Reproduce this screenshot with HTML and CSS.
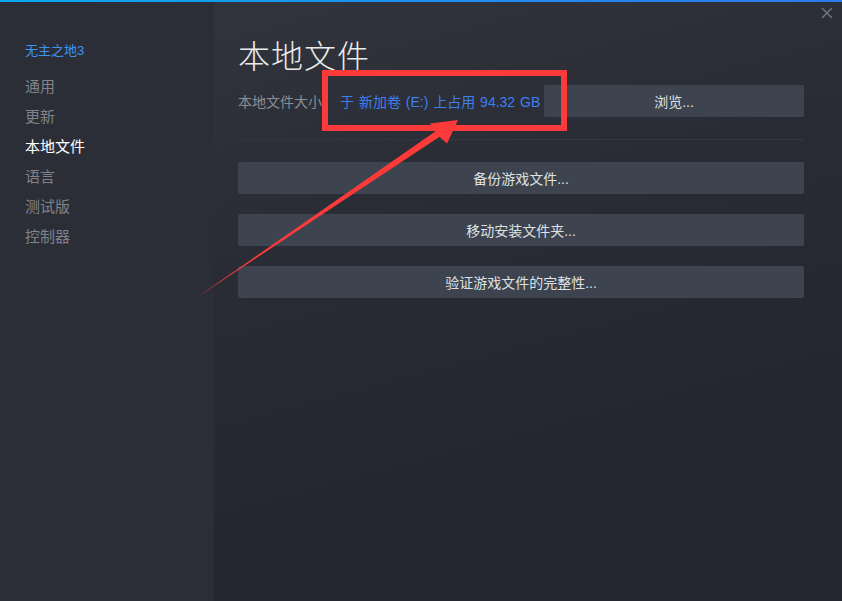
FILE: index.html
```html
<!DOCTYPE html>
<html lang="zh-CN">
<head>
<meta charset="utf-8">
<title>本地文件</title>
<link rel="stylesheet" href="styles.css">
</head>
<body>
<div class="app">
  <div class="topline"></div>
  <div class="window">
    <nav class="sidebar">
      <div class="game">无主之地3</div>
      <ul class="menu">
        <li>通用</li>
        <li>更新</li>
        <li class="active">本地文件</li>
        <li>语言</li>
        <li>测试版</li>
        <li>控制器</li>
      </ul>
    </nav>
    <main class="content">
      <h1 class="title">本地文件</h1>
      <div class="size-row">
        <div class="size-text"><span class="label">本地文件大小：</span><span class="value">于 新加卷 (E:) 上占用 94.32 GB</span></div>
        <button class="btn browse">浏览...</button>
      </div>
      <div class="sep"></div>
      <div class="actions">
        <button class="btn">备份游戏文件...</button>
        <button class="btn">移动安装文件夹...</button>
        <button class="btn">验证游戏文件的完整性...</button>
      </div>
    </main>
  </div>
  <div class="close">
    <svg width="12" height="12" viewBox="0 0 12 12"><path d="M1 1 L11 11 M11 1 L1 11" stroke="#68737d" stroke-width="1.6" fill="none"/></svg>
  </div>
  <svg class="annot" width="842" height="601" viewBox="0 0 842 601">
    <rect x="325" y="73" width="239" height="55" fill="none" stroke="#fd3a3a" stroke-width="6"/>
    <polygon points="196,298 435.5,131.2 430,123.5 458,120 447,143.5 439.5,136.8" fill="#fd3a3a"/>
  </svg>
</div>
</body>
</html>
```

FILE: styles.css
```css
* { box-sizing: border-box; }
html, body { margin: 0; padding: 0; }
body {
  width: 842px;
  height: 601px;
  overflow: hidden;
  background: #24272f;
  font-family: "Liberation Sans", "Noto Sans CJK SC", sans-serif;
}
.app {
  position: relative;
  width: 842px;
  height: 601px;
  display: flex;
  flex-direction: column;
}
.topline {
  height: 2px;
  flex: none;
  background: linear-gradient(to right, #0aa9ee, #2f78f0);
}
.window {
  flex: 1;
  display: flex;
}
.sidebar {
  width: 214px;
  flex: none;
  background: #2b2e37;
  padding: 39px 0 0 25px;
}
.game {
  font-size: 13px;
  line-height: 20px;
  color: #3f94f2;
}
.menu {
  list-style: none;
  margin: 11px 0 0;
  padding: 0;
}
.menu li {
  font-size: 15px;
  line-height: 30px;
  color: #80838a;
}
.menu li.active { color: #ffffff; }
.content {
  flex: 1;
  background: linear-gradient(165deg, #31343c 0%, #292c34 35%, #24272f 70%);
  padding: 32px 38px 0 24px;
  display: flex;
  flex-direction: column;
}
.title {
  margin: 0;
  font-family: "Noto Sans CJK SC", sans-serif;
  font-weight: 300;
  font-size: 32px;
  line-height: 40px;
  color: #ebebeb;
  letter-spacing: 1px;
}
.size-row {
  margin-top: 11px;
  display: flex;
  align-items: center;
  height: 32px;
}
.size-text {
  flex: 1;
  font-size: 14px;
  white-space: nowrap;
  overflow: hidden;
}
.label { color: #8b8e95; }
.value { color: #3d7ff0; margin-left: 4px; word-spacing: 1px; }
.btn {
  display: block;
  border: none;
  border-radius: 2px;
  background: #3d4450;
  color: #dfe1e3;
  font-family: "Liberation Sans", "Noto Sans CJK SC", sans-serif;
  font-size: 14px;
  height: 32px;
  padding: 0;
  text-align: center;
  width: 100%;
}
.browse {
  width: 260px;
  flex: none;
}
.sep {
  margin-top: 22px;
  height: 1px;
  background: #33363e;
}
.actions {
  margin-top: 22px;
  display: flex;
  flex-direction: column;
  gap: 20px;
}
.close {
  position: absolute;
  top: 7px;
  right: 9px;
  width: 12px;
  height: 12px;
  line-height: 0;
}
.annot {
  position: absolute;
  left: 0;
  top: 0;
  pointer-events: none;
}
```
